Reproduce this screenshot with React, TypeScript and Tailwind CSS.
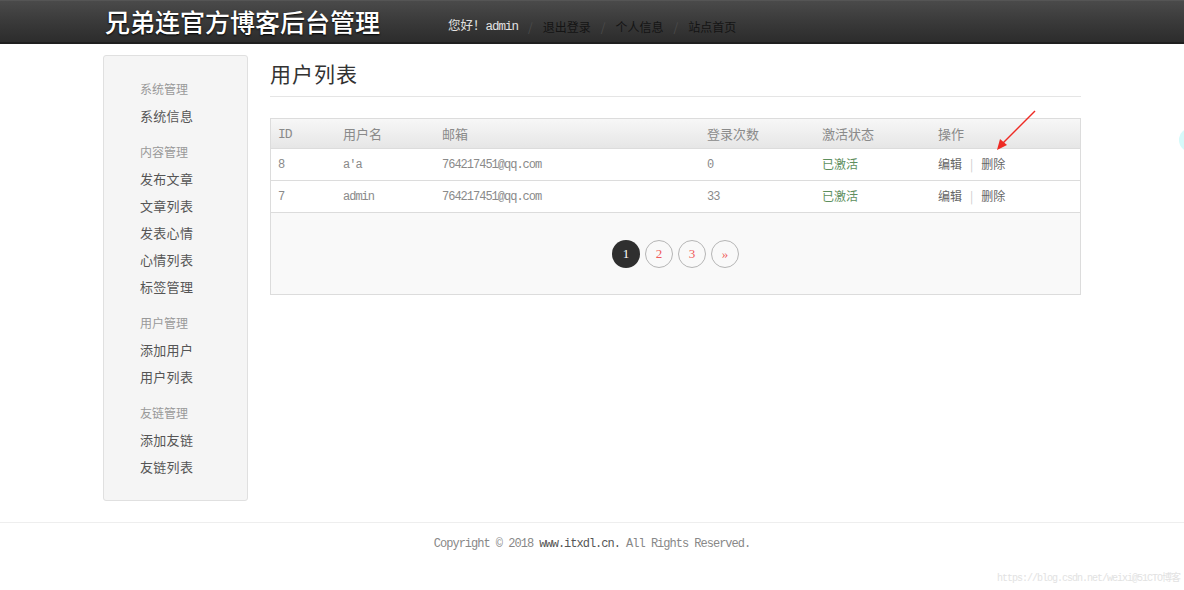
const cjk = "font-['Noto_Sans_CJK_SC',sans-serif]"
const mono = "font-['Liberation_Mono','Noto_Sans_CJK_SC',monospace] tracking-[-1px]"

const menu = [
    { title: '系统管理', items: ['系统信息'] },
    { title: '内容管理', items: ['发布文章', '文章列表', '发表心情', '心情列表', '标签管理'] },
    { title: '用户管理', items: ['添加用户', '用户列表'] },
    { title: '友链管理', items: ['添加友链', '友链列表'] },
]

const users = [
    { id: '8', name: "a'a", email: '764217451@qq.com', count: '0' },
    { id: '7', name: 'admin', email: '764217451@qq.com', count: '33' },
]

function Header() {
    return (
        <header className="h-[44px] bg-gradient-to-b from-[#4a4a4a] via-[#3a3a3a] to-[#2c2c2c] border-t border-[#555] border-b-2 border-b-[#1f1f1f]">
            <div className="w-[978px] mx-auto h-full flex items-center">
                <h1 className={`${cjk} ml-[2px] w-[278px] whitespace-nowrap text-[25px] leading-none font-medium text-white [text-shadow:0_1px_2px_#000]`}>
                    兄弟连官方博客后台管理
                </h1>
                <nav className={`${cjk} ml-[65px] mt-[10px] flex items-center text-[12px] text-[#141414]`}>
                    <span className="text-[#e2e2e2] text-[12.5px]">
                        您好！<span className={mono}>admin</span>
                    </span>
                    <span className="mx-[10px] text-[#4a4a4a]">/</span>
                    <a>退出登录</a>
                    <span className="mx-[10px] text-[#4a4a4a]">/</span>
                    <a>个人信息</a>
                    <span className="mx-[10px] text-[#4a4a4a]">/</span>
                    <a>站点首页</a>
                </nav>
            </div>
        </header>
    )
}

function Sidebar() {
    return (
        <aside className={`${cjk} w-[145px] shrink-0 bg-[#f5f5f5] border border-[#e0e0e0] rounded-[3px] pt-[19px] pb-[20px] pl-[36px]`}>
            {menu.map((group, i) => (
                <div key={group.title} className={i > 0 ? 'mt-[9px]' : ''}>
                    <div className="h-[27px] leading-[27px] text-[12px] text-[#999]">{group.title}</div>
                    {group.items.map(item => (
                        <div key={item} className="h-[27px] leading-[27px] text-[13px] text-[#555] tracking-[0.3px]">
                            {item}
                        </div>
                    ))}
                </div>
            ))}
        </aside>
    )
}

function Pagination() {
    return (
        <div className="h-[81px] bg-[#f9f9f9] flex items-center justify-center gap-[5px] font-['Liberation_Serif',serif] text-[13px]">
            <span className="w-[28px] h-[28px] rounded-full bg-[#2f2f2f] text-white flex items-center justify-center">1</span>
            <span className="w-[28px] h-[28px] rounded-full border border-[#b5b5b5] text-[#f05a5a] flex items-center justify-center">2</span>
            <span className="w-[28px] h-[28px] rounded-full border border-[#b5b5b5] text-[#f05a5a] flex items-center justify-center">3</span>
            <span className="w-[28px] h-[28px] rounded-full border border-[#b5b5b5] text-[#f05a5a] flex items-center justify-center">»</span>
        </div>
    )
}

function UserTable() {
    return (
        <div className="mt-[21px] border border-[#dcdcdc]">
            <table className="w-full border-collapse text-left">
                <thead>
                    <tr className={`${cjk} h-[29px] bg-gradient-to-b from-[#f7f7f7] to-[#e6e6e6] text-[13px] text-[#8a8a8a]`}>
                        <th className="w-[65px] pl-[7px] font-normal"><span className={mono}>ID</span></th>
                        <th className="w-[99px] pl-[7px] font-normal">用户名</th>
                        <th className="w-[265px] pl-[7px] font-normal">邮箱</th>
                        <th className="w-[115px] pl-[7px] font-normal">登录次数</th>
                        <th className="w-[116px] pl-[7px] font-normal">激活状态</th>
                        <th className="pl-[7px] font-normal">操作</th>
                    </tr>
                </thead>
                <tbody className="text-[12px] text-[#8a8a8a]">
                    {users.map(u => (
                        <tr key={u.id} className="h-[32px] border-t border-[#dcdcdc] bg-white">
                            <td className={`pl-[7px] pt-[1px] ${mono}`}>{u.id}</td>
                            <td className={`pl-[7px] pt-[1px] ${mono}`}>{u.name}</td>
                            <td className={`pl-[7px] pt-[1px] ${mono}`}>{u.email}</td>
                            <td className={`pl-[7px] pt-[1px] ${mono}`}>{u.count}</td>
                            <td className={`pl-[7px] ${cjk} text-[#5e8f5e]`}>已激活</td>
                            <td className={`pl-[7px] ${cjk} text-[#666]`}>
                                编辑<span className="mx-[8px] text-[#ccc]">|</span>删除
                            </td>
                        </tr>
                    ))}
                </tbody>
            </table>
            <div className="border-t border-[#dcdcdc]">
                <Pagination />
            </div>
        </div>
    )
}

export default function App() {
    return (
        <div className="relative min-h-[590px] bg-white overflow-hidden">
            <Header />
            <div className="w-[978px] mx-auto mt-[11px] flex gap-[22px] items-start">
                <Sidebar />
                <main className="flex-1">
                    <h2 className={`${cjk} pt-[4px] text-[21px] leading-[28px] text-[#333] tracking-[1px] pb-[9px] border-b border-[#e5e5e5]`}>
                        用户列表
                    </h2>
                    <UserTable />
                </main>
            </div>
            <footer className="mt-[21px] border-t border-[#eeeeee] pt-[11px] text-center text-[12px] text-[#888]">
                <span className={mono}>
                    Copyright © 2018 <span className="text-[#555]">www.itxdl.cn.</span> All Rights Reserved.
                </span>
            </footer>

            {/* annotation arrow */}
            <svg className="absolute left-[990px] top-[106px]" width="50" height="50" viewBox="0 0 50 50">
                <line x1="45" y1="5" x2="12" y2="38" stroke="#ee2b24" strokeWidth="1.5" />
                <polygon points="7,44 10,33 17,39" fill="#ee2b24" />
            </svg>
            <div className="absolute left-[1179px] top-[128px] w-[24px] h-[24px] rounded-full bg-[#d6fafa]" />
            <div className={`absolute right-[4px] bottom-[4px] text-[10px] text-[#e2e2e2] ${mono}`}>
                https://blog.csdn.net/weixi@51CTO博客
            </div>
        </div>
    )
}
